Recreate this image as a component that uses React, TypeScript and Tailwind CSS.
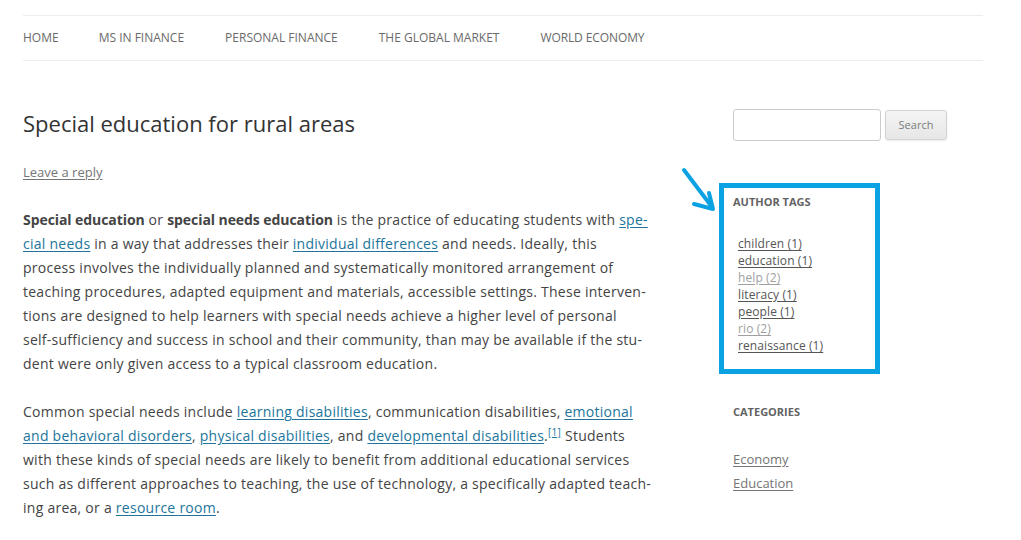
import React from "react";

const A = ({ children }: { children: React.ReactNode }) => (
  <a href="#" className="text-[#21759b] underline underline-offset-2">
    {children}
  </a>
);

const B = ({ children }: { children: React.ReactNode }) => (
  <b className="tracking-[-0.07px]">{children}</b>
);

const tags: [string, boolean][] = [
  ["children (1)", true],
  ["education (1)", true],
  ["help (2)", false],
  ["literacy (1)", true],
  ["people (1)", true],
  ["rio (2)", false],
  ["renaissance (1)", true],
];

export default function App() {
  return (
    <div
      className="relative w-[1021px] h-[540px] overflow-hidden bg-white"
      style={{ fontFamily: '"Open Sans", "Noto Sans", sans-serif' }}
    >
      <div className="ml-[23px] w-[960px] pt-[15px]">
        <nav className="flex h-[46px] items-center border-y border-[#ededed] text-[12px] uppercase text-[#6a6a6a]">
          <span>Home</span>
          <span className="ml-[40px]">MS in Finance</span>
          <span className="ml-[41px]">Personal Finance</span>
          <span className="ml-[41px]">The Global Market</span>
          <span className="ml-[41px] tracking-[-0.1px]">World Economy</span>
        </nav>

        <div className="flex">
          <main className="w-[625px] pt-[46px] text-[#444]">
            <h1 className="text-[22px] leading-[32px] text-[#333]">Special education for rural areas</h1>
            <div className="mt-[23px] text-[13px] leading-[20px]">
              <a href="#" className="text-[#757575] underline underline-offset-2">Leave a reply</a>
            </div>
            <p className="mt-[26px] whitespace-nowrap text-[14px] leading-[24px] tracking-[0.26px]">
              <B>Special education</B> or <B>special needs education</B> is the practice of educating students with <A>spe-</A>
              <br />
              <A>cial needs</A> in a way that addresses their <A>individual differences</A> and needs. Ideally, this
              <br />
              process involves the individually planned and systematically monitored arrangement of
              <br />
              teaching procedures, adapted equipment and materials, accessible settings. These interven-
              <br />
              tions are designed to help learners with special needs achieve a higher level of personal
              <br />
              self-sufficiency and success in school and their community, than may be available if the stu-
              <br />
              dent were only given access to a typical classroom education.
            </p>
            <p className="mt-[24px] whitespace-nowrap text-[14px] leading-[24px] tracking-[0.26px]">
              Common special needs include <A>learning disabilities</A>, communication disabilities, <A>emotional</A>
              <br />
              <A>and behavioral disorders</A>, <A>physical disabilities</A>, and <A>developmental disabilities</A>.
              <sup className="text-[10px] text-[#21759b] underline">[1]</sup> Students
              <br />
              with these kinds of special needs are likely to benefit from additional educational services
              <br />
              such as different approaches to teaching, the use of technology, a specifically adapted teach-
              <br />
              ing area, or a <A>resource room</A>.
            </p>
          </main>

          <aside className="ml-[85px] w-[250px] pt-[48px]">
            <div className="flex items-center gap-[4px]">
              <input
                type="text"
                className="h-[32px] w-[148px] rounded-[3px] border border-[#cccccc] bg-white"
              />
              <button className="h-[30px] w-[62px] rounded-[3px] border border-[#d2d2d2] bg-gradient-to-b from-[#f4f4f4] to-[#e6e6e6] text-[11px] text-[#7c7c7c] shadow-[0_1px_2px_rgba(64,64,64,0.1)]">
                Search
              </button>
            </div>

            <div className="ml-[-14px] mt-[42px] h-[191px] w-[161px] border-[5px] border-[#0aa2e2] pl-[9px] pt-[7px]">
              <h3 className="text-[11px] font-bold uppercase leading-[14px] text-[#636363]">Author Tags</h3>
              <ul className="ml-[5px] mt-[26px] text-[12px] leading-[17px] tracking-[0.1px]">
                {tags.map(([t, dark]) => (
                  <li key={t}>
                    <a
                      href="#"
                      className={
                        dark
                          ? "text-[#555] underline underline-offset-2"
                          : "text-[#a0a0a0] underline underline-offset-2"
                      }
                    >
                      {t}
                    </a>
                  </li>
                ))}
              </ul>
            </div>

            <h3 className="mt-[31px] text-[11px] font-bold uppercase leading-[14px] text-[#636363]">Categories</h3>
            <ul className="mt-[28px] text-[13px] leading-[24px]">
              <li>
                <a href="#" className="text-[#757575] underline underline-offset-2">Economy</a>
              </li>
              <li>
                <a href="#" className="text-[#757575] underline underline-offset-2">Education</a>
              </li>
            </ul>
          </aside>
        </div>
      </div>

      <svg
        className="absolute left-0 top-0"
        width="1021"
        height="540"
        viewBox="0 0 1021 540"
        fill="none"
      >
        <path
          d="M684 170 L712 207 M709 193 L713 209 L694 204"
          stroke="#0aa2e2"
          strokeWidth="4"
          strokeLinecap="round"
          strokeLinejoin="round"
        />
      </svg>
    </div>
  );
}
